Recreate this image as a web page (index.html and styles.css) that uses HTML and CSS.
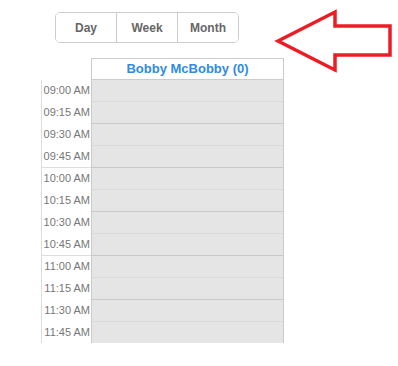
FILE: index.html
```html
<!DOCTYPE html>
<html lang="en">
  <head>
    <meta charset="UTF-8" />
    <meta name="viewport" content="width=device-width, initial-scale=1.0" />
    <title>Scheduler</title>

    <link rel="stylesheet" href="styles.css">
  </head>
  <body>
    <div class="toolbar">
      <div class="btnGroup">
        <button class="viewBtn">Day</button>
        <button class="viewBtn">Week</button>
        <button class="viewBtn">Month</button>
      </div>
    </div>

    <svg class="arrow" width="128" height="75" viewBox="0 0 128 75">
      <polygon points="8,36 65,7 65,21 120,21 120,50 65,50 65,65" />
    </svg>

    <div class="calendar">
      <div class="calHead">
        <div class="corner"></div>
        <div class="resource">Bobby McBobby (0)</div>
      </div>

      <div class="calBody">
        <div class="times">
          <div class="hour">
            <span>09:00 AM</span>
            <span>09:15 AM</span>
            <span>09:30 AM</span>
            <span>09:45 AM</span>
          </div>
          <div class="hour">
            <span>10:00 AM</span>
            <span>10:15 AM</span>
            <span>10:30 AM</span>
            <span>10:45 AM</span>
          </div>
          <div class="hour">
            <span>11:00 AM</span>
            <span>11:15 AM</span>
            <span>11:30 AM</span>
            <span>11:45 AM</span>
          </div>
        </div>

        <div class="slots">
          <div class="slot"></div>
          <div class="slot half"></div>
          <div class="slot"></div>
          <div class="slot half"></div>
          <div class="slot"></div>
          <div class="slot half"></div>
          <div class="slot"></div>
          <div class="slot half"></div>
          <div class="slot"></div>
          <div class="slot half"></div>
          <div class="slot"></div>
          <div class="slot half"></div>
        </div>
      </div>
    </div>
  </body>
</html>
```

FILE: styles.css
```css
* {
  margin: 0;
  padding: 0;
  box-sizing: border-box;
  font-family: "Liberation Sans", Arial, Helvetica, sans-serif;
}

body {
  background: #fff;
  position: relative;
}

.toolbar {
  padding: 12px 0 0 55px;
}

.btnGroup {
  display: flex;
  width: 184px;
  height: 31px;
  border: 1px solid #ccc;
  border-radius: 5px;
  overflow: hidden;
}

.viewBtn {
  flex: 1;
  border: none;
  outline: none;
  background: #fff;
  color: #666;
  font-size: 12px;
  font-weight: bold;
  cursor: pointer;
}

.viewBtn + .viewBtn {
  border-left: 1px solid #ccc;
}

.arrow {
  position: absolute;
  left: 270px;
  top: 5px;
}

.arrow polygon {
  fill: none;
  stroke: #ed1c24;
  stroke-width: 3.5;
}

.calendar {
  margin: 15px 0 0 41px;
}

.calHead {
  display: flex;
}

.corner {
  width: 50px;
}

.resource {
  width: 193px;
  height: 22px;
  border: 1px solid #ccc;
  color: #2f8be3;
  font-size: 13px;
  font-weight: bold;
  text-align: center;
  line-height: 20px;
}

.calBody {
  display: flex;
  height: 263px;
  overflow: hidden;
}

.times {
  width: 50px;
  border-left: 1px solid #ddd;
}

.hour {
  display: grid;
  grid-template-rows: repeat(4, 22px);
  height: 88px;
  border-bottom: 1px solid #ddd;
}

.hour span {
  color: #777;
  font-size: 11px;
  line-height: 21px;
  text-align: right;
  padding-right: 1px;
}

.slots {
  width: 193px;
  border-left: 1px solid #ccc;
  border-right: 1px solid #ccc;
}

.slot {
  height: 22px;
  background: #e5e5e5;
  border-bottom: 1px solid #dadada;
}

.slot.half {
  border-bottom-color: #c8c8c8;
}
```
